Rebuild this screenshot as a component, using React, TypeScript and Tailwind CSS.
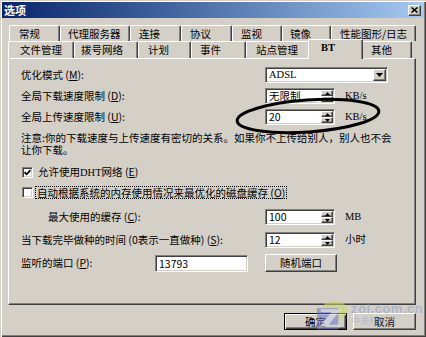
import React from "react";

const sunken =
  "border border-t-[#808080] border-l-[#808080] border-r-white border-b-white shadow-[inset_1px_1px_0_#404040,inset_-1px_-1px_0_#d4d0c8]";
const raised =
  "border border-t-white border-l-white border-r-[#404040] border-b-[#404040] shadow-[inset_-1px_-1px_0_#808080]";

function U({ children }: { children: React.ReactNode }) {
  return <span className="underline underline-offset-[1px]">{children}</span>;
}

const row1 = [
  { label: "常规", cls: "w-[51px] pl-[9px]" },
  { label: "代理服务器", cls: "w-[70px] pl-[7px]" },
  { label: "连接", cls: "w-[51px] pl-[8px]" },
  { label: "协议", cls: "w-[51px] pl-[8px]" },
  { label: "监视", cls: "w-[50px] pl-[8px]" },
  { label: "镜像", cls: "w-[49px] pl-[7px]" },
  { label: "性能图形/日志", cls: "w-[85px] pl-[8px]" },
];

const row2 = [
  { label: "文件管理", cls: "w-[66px] pl-[11px]" },
  { label: "拨号网络", cls: "w-[64px] pl-[6px]" },
  { label: "计划", cls: "w-[53px] pl-[9px]" },
  { label: "事件", cls: "w-[55px] pl-[8px]" },
  { label: "站点管理", cls: "w-[64px] pl-[9px]" },
  { label: "BT", cls: "w-[55px] pl-[10px]", active: true },
  { label: "其他", cls: "w-[51px] pl-[9px]" },
];

function Tab({ label, cls, active }: { label: string; cls: string; active?: boolean }) {
  if (active) {
    return (
      <div
        className={`relative z-10 -mx-[2px] -mb-[1px] h-[20px] bg-[#d4d0c8] flex items-start pt-[2px] border-t border-l border-white border-r border-r-[#404040] rounded-t-[2px] shadow-[inset_-1px_0_0_#808080] ${cls}`}
      >
        <span className="pl-[2px] font-['Liberation_Serif',serif] font-semibold text-[10.5px]">{label}</span>
      </div>
    );
  }
  return (
    <div
      className={`h-full shrink-0 flex items-center border-t border-l border-white border-r border-r-[#404040] rounded-t-[2px] shadow-[inset_-1px_0_0_#808080] ${cls}`}
    >
      {label}
    </div>
  );
}

function SpinButtons() {
  return (
    <div className="flex flex-col w-[12px] h-full">
      <div className={`flex-1 flex items-center justify-center bg-[#d4d0c8] ${raised}`}>
        <svg width="5" height="3" viewBox="0 0 5 3">
          <path d="M2.5 0L5 3H0z" fill="#000" />
        </svg>
      </div>
      <div className={`flex-1 flex items-center justify-center bg-[#d4d0c8] ${raised}`}>
        <svg width="5" height="3" viewBox="0 0 5 3">
          <path d="M0 0H5L2.5 3z" fill="#000" />
        </svg>
      </div>
    </div>
  );
}

function Spin({ value }: { value: string }) {
  return (
    <div className={`${sunken} w-[70px] h-[16px] bg-white p-[1px] flex`}>
      <span className="flex-1 pl-[2px] leading-[12px]">{value}</span>
      <SpinButtons />
    </div>
  );
}

function Check({ checked }: { checked?: boolean }) {
  return (
    <div className={`${sunken} w-[11px] h-[11px] bg-white flex items-center justify-center shrink-0`}>
      {checked && (
        <svg width="7" height="7" viewBox="0 0 7 7">
          <path d="M0.5 3.2L2.6 5.3L6.5 1.2" stroke="#000" strokeWidth="1.7" fill="none" />
        </svg>
      )}
    </div>
  );
}

function Unit({ children }: { children: React.ReactNode }) {
  return <span className="ml-[10px] font-['Liberation_Serif','Noto_Sans_CJK_SC',serif]">{children}</span>;
}

function Panel() {
  return (
    <div className="w-[408px] h-[247px] border border-t-white border-l-white border-r-[#404040] border-b-[#404040] shadow-[inset_-1px_-1px_0_#808080] pl-[12px] flex flex-col">
      <div className="flex items-center h-[16px] mt-[8px]">
        <span className="w-[244px]">
          优化模式 (<U>M</U>):
        </span>
        <div className={`${sunken} w-[123px] h-[16px] bg-white p-[1px] flex`}>
          <span className="flex-1 pl-[2px] leading-[12px] font-['Liberation_Serif',serif]">ADSL</span>
          <div className={`w-[13px] h-full flex items-center justify-center bg-[#d4d0c8] ${raised}`}>
            <svg width="7" height="4" viewBox="0 0 7 4">
              <path d="M0 0H7L3.5 4z" fill="#000" />
            </svg>
          </div>
        </div>
      </div>
      <div className="flex items-center h-[16px] mt-[5px]">
        <span className="w-[244px]">
          全局下载速度限制 (<U>D</U>):
        </span>
        <Spin value="无限制" />
        <Unit>KB/s</Unit>
      </div>
      <div className="flex items-center h-[16px] mt-[5px]">
        <span className="w-[244px]">
          全局上传速度限制 (<U>U</U>):
        </span>
        <Spin value="20" />
        <Unit>KB/s</Unit>
      </div>
      <div className="mt-[7px] whitespace-nowrap flex flex-col">
        <span className="h-[12px] leading-[12px]">
          注意:你的下载速度与上传速度有密切的关系。如果你不上传给别人，别人也不会
        </span>
        <span className="h-[12px] leading-[12px]">让你下载。</span>
      </div>
      <div className="flex items-center gap-[5px] h-[12px] mt-[10px] pl-[1px]">
        <Check checked />
        <span>
          允许使用<span className="font-['Liberation_Serif',serif]">DHT</span>网络 (<U>E</U>)
        </span>
      </div>
      <div className="flex items-center gap-[2px] h-[12px] mt-[8px] pl-[1px]">
        <Check />
        <span className="border border-dotted border-black px-[1px] leading-[11px]">
          自动根据系统的内存使用情况来最优化的磁盘缓存 (<U>O</U>)
        </span>
      </div>
      <div className="flex items-center h-[16px] mt-[11px]">
        <span className="w-[244px] pl-[27px]">
          最大使用的缓存 (<U>C</U>):
        </span>
        <Spin value="100" />
        <Unit>MB</Unit>
      </div>
      <div className="flex items-center h-[16px] mt-[7px]">
        <span className="w-[244px]">
          当下载完毕做种的时间 (0表示一直做种) (<U>S</U>):
        </span>
        <Spin value="12" />
        <Unit>小时</Unit>
      </div>
      <div className="flex items-center h-[18px] mt-[6px]">
        <span className="w-[134px]">
          监听的端口 (<U>P</U>):
        </span>
        <div className={`${sunken} w-[93px] h-[17px] bg-white p-[1px]`}>
          <span className="pl-[2px] leading-[13px]">13793</span>
        </div>
        <button className={`ml-[17px] w-[72px] h-[18px] bg-[#d4d0c8] ${raised} flex items-center justify-center`}>
          随机端口
        </button>
      </div>
    </div>
  );
}

function Watermark() {
  return (
    <div className="absolute left-[315px] top-[299px] flex items-start gap-[3px] pointer-events-none">
      <svg width="33" height="31" viewBox="0 0 34 31" className="opacity-55">
        <ellipse cx="20" cy="11" rx="13" ry="10" fill="#c9d86a" />
        <path d="M2 9H24V31H2z" fill="#6a78c4" />
        <path d="M6 10H27L14 26H26V29H4L17 13H6z" fill="#e8ecf0" opacity="0.8" />
      </svg>
      <div className="flex flex-col mt-[4px] opacity-50">
        <span className="font-['Liberation_Sans',sans-serif] font-bold text-[13px] leading-[12px] text-[#8c9cc8] tracking-[0.5px]">
          zol.com.cn
        </span>
        <span className="text-[9px] leading-[12px] text-[#9aa8d0]">中关村在线</span>
      </div>
    </div>
  );
}

export default function App() {
  return (
    <div className="relative w-[426px] h-[337px] bg-[#d4d0c8] p-[2px] flex flex-col text-black text-[10.5px] leading-[12px] font-['Noto_Sans_CJK_SC','Noto_Sans',sans-serif] shadow-[inset_1px_1px_0_#d4d0c8,inset_2px_2px_0_#ffffff,inset_-1px_-1px_0_#404040,inset_-2px_-2px_0_#808080] overflow-hidden">
      <div className="h-[16px] flex items-center justify-between bg-linear-to-r from-[#0a246a] to-[#a6caf0]">
        <span className="pl-[2px] text-white font-bold text-[11px]">选项</span>
        <div className={`mr-[3px] w-[13px] h-[11px] bg-[#d4d0c8] ${raised} flex items-center justify-center`}>
          <svg width="7" height="6" viewBox="0 0 7 6">
            <path d="M0.5 0.5L6.5 5.5M6.5 0.5L0.5 5.5" stroke="#000" strokeWidth="1.6" />
          </svg>
        </div>
      </div>
      <div className="px-[6px] pt-[7px]">
        <div className="flex h-[16px] ml-[1px]">
          {row1.map((t) => (
            <Tab key={t.label} label={t.label} cls={t.cls} />
          ))}
        </div>
        <div className="flex items-end h-[17px]">
          {row2.map((t) => (
            <Tab key={t.label} label={t.label} cls={t.cls} active={t.active} />
          ))}
        </div>
        <Panel />
      </div>
      <div className="flex justify-end gap-[6px] pr-[8px] mt-[8px]">
        <button className="w-[63px] h-[17px] bg-[#d4d0c8] border border-black shadow-[inset_1px_1px_0_#ffffff,inset_-1px_-1px_0_#404040,inset_-2px_-2px_0_#808080] flex items-center justify-center">
          确定
        </button>
        <button className={`w-[63px] h-[17px] bg-[#d4d0c8] ${raised} flex items-center justify-center`}>取消</button>
      </div>
      <svg className="absolute left-0 top-0 pointer-events-none" width="426" height="337">
        <ellipse cx="308" cy="116" rx="71" ry="16" fill="none" stroke="#000" strokeWidth="3" transform="rotate(-4 308 116)" />
      </svg>
      <Watermark />
    </div>
  );
}
